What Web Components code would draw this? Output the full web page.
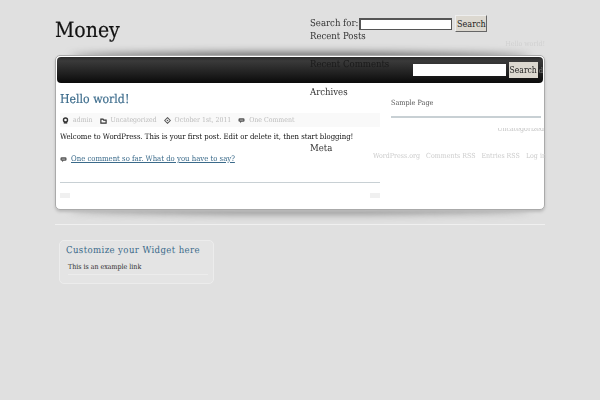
<!DOCTYPE html>
<html>
<head>
<meta charset="utf-8">
<title>Money</title>
<style>
  html, body { margin: 0; padding: 0; background: #e0e0e0; }
  body { font-family: "DejaVu Serif", serif; font-stretch: condensed; height: 400px; overflow: hidden; }
</style>
</head>
<body>
<money-page>
  <money-header slot="header" title-text="Money"></money-header>
  <money-panel slot="panel">
    <money-post></money-post>
    <money-sidebar slot="side"></money-sidebar>
  </money-panel>
  <money-widget slot="footer" heading="Customize your Widget here">This is an example link</money-widget>
</money-page>

<script>
const iconPaths = {
  user: '<circle cx="4" cy="3.4" r="2.3" fill="none" stroke="#333" stroke-width="1.6"/><rect x="2" y="5.800" width="4" height="1.700" fill="#333"/>',
  folder: '<path d="M1 3.500V2.500h2.500l.7 1H7v3.500H1z" fill="none" stroke="#333" stroke-width="1.300"/>',
  clock: '<path d="M4 .8L7.200 4 4 7.200.8 4z" fill="none" stroke="#555" stroke-width="1.200"/><circle cx="4" cy="4" r=".9" fill="#555"/>',
  bubble: '<path d="M2 1.500h4q1.500 0 1.500 1.500v1q0 1.500-1.500 1.500H4L2.500 7V5.500H2Q.5 5.500.5 4V3q0-1.500 1.500-1.500z" fill="#555"/><rect x="2" y="3.100" width="4" height=".8" fill="#ddd"/>'
};
const icon = name => `<svg width="7" height="7" viewBox="0 0 8 8">${iconPaths[name]}</svg>`;

class MoneyPage extends HTMLElement {
  connectedCallback() {
    this.attachShadow({ mode: 'open' }).innerHTML = `
      <style>
        :host { display: block; width: 490px; margin-left: 55px; position: relative; filter: blur(.3px); text-rendering: geometricPrecision; }
        .rule { height: 1px; background: #f0f0f0; margin-top: 14px; }
        .foot { padding: 15px 0 0 4px; }
      </style>
      <slot name="header"></slot>
      <slot name="panel"></slot>
      <div class="rule"></div>
      <div class="foot"><slot name="footer"></slot></div>`;
  }
}

class MoneyHeader extends HTMLElement {
  connectedCallback() {
    this.attachShadow({ mode: 'open' }).innerHTML = `
      <style>
        :host { display: flex; height: 55px; position: relative; }
        h1 { margin: 17px 0 0; font: 400 condensed 21px/26px "DejaVu Serif", serif; -webkit-text-stroke: .2px #111; color: #111; width: 255px; }
        form { display: flex; align-items: center; height: 17px; margin-top: 15px; font-size: 9.5px; color: #333; }
        input { box-sizing: border-box; width: 93px; height: 12px; border: 1px solid #555; border-width: 2px 1px 1px 2px; background: #fff; margin: 0 3px 0 1px; padding: 0; }
        button { height: 17px; width: 32px; padding: 0; font: 400 condensed 9px "DejaVu Serif", serif; color: #222; background: #dcd8d0; border: 1px solid #eee; border-right-color: #666; border-bottom-color: #666; }
        .hello { position: absolute; right: 0; top: 40px; font-size: 7px; color: #d0d0d0; }
      </style>
      <h1>${this.getAttribute('title-text')}</h1>
      <form><label>Search for:</label><input><button type="button">Search</button></form>
      <span class="hello">Hello world!</span>`;
  }
}

class MoneyPanel extends HTMLElement {
  connectedCallback() {
    this.attachShadow({ mode: 'open' }).innerHTML = `
      <style>
        :host { display: block; position: relative; }
        .box { position: relative; background: #fff; border: 1px solid #aaa; border-radius: 5px; padding: 1px; height: 151px; box-shadow: 0 2px 3px #bbb; }
        .glow { position: absolute; left: 15px; right: 15px; height: 8px; border-radius: 50%; background: #555; filter: blur(4px); }
        .glow.t { top: -2px; }
        .glow.b { bottom: -3px; background: #777; }
        nav { display: flex; justify-content: flex-end; align-items: center; height: 26px; border-radius: 4px; font-size: 7.5px; color: #777;
          background: linear-gradient(#2a2a2a, #3a3a3a 15%, #1c1c1c 70%, #0a0a0a); }
        nav input { box-sizing: border-box; width: 93px; height: 12px; padding: 0; border: 0; background: #fff; margin-right: 3px; }
        nav button { width: 29px; height: 16px; padding: 0; margin-right: 1px; font: 400 condensed 8.500px "DejaVu Serif", serif; color: #222; background: #dcd8d0; border: 0; }
        .body { display: flex; padding-left: 3px; }
        .main { width: 320px; }
        .lists { position: absolute; left: 255px; top: -25px; font-size: 9.5px; color: #333; line-height: 14px; }
        .lists div { height: 28px; }
        .lists .dark { color: #1a1a1a; }
        .lists .gap { height: 56px; }
      </style>
      <div class="glow t"></div>
      <div class="glow b"></div>
      <div class="box">
        <nav><input><button type="button">Search</button><span>d</span></nav>
        <div class="body">
          <div class="main"><slot></slot></div>
          <slot name="side"></slot>
        </div>
      </div>
      <div class="lists"><div>Recent Posts</div><div class="dark">Recent Comments</div><div class="gap">Archives</div><div>Meta</div></div>`;
  }
}

class MoneyPost extends HTMLElement {
  connectedCallback() {
    this.attachShadow({ mode: 'open' }).innerHTML = `
      <style>
        :host { display: block; }
        h2 { margin: 0; padding-top: 9px; height: 21px; font: 400 condensed 12.200px/15px "DejaVu Serif", serif; -webkit-text-stroke: .15px #3a6a8a; color: #3a6a8a; }
        .meta { display: flex; align-items: center; height: 14px; padding-left: 2px; background: #f9f9f9; font-size: 6.900px; color: #bbb; }
        .meta span { margin: 0 7px 0 4px; white-space: nowrap; }
        p { margin: 5px 0 0; font-size: 7.700px; line-height: 10px; color: #111; white-space: nowrap; }
        .comment { display: flex; align-items: center; gap: 4px; margin-top: 12px; font-size: 7.700px; line-height: 10px; }
        .comment a { color: #3a6a8a; text-decoration: underline; }
        .foot { margin-top: 18px; border-top: 1px solid #c8d0d4; height: 15px; display: flex; justify-content: space-between; align-items: flex-end; }
        .foot i { width: 10px; height: 5px; background: #f0f0f0; }
      </style>
      <h2>Hello world!</h2>
      <div class="meta">${icon('user')}<span>admin</span>${icon('folder')}<span>Uncategorized</span>${icon('clock')}<span>October 1st, 2011</span>${icon('bubble')}<span>One Comment</span></div>
      <p>Welcome to WordPress. This is your first post. Edit or delete it, then start blogging!</p>
      <div class="comment">${icon('bubble')}<a>One comment so far. What do you have to say?</a></div>
      <div class="foot"><i></i><i></i></div>`;
  }
}

class MoneySidebar extends HTMLElement {
  connectedCallback() {
    this.attachShadow({ mode: 'open' }).innerHTML = `
      <style>
        :host { display: block; position: relative; flex: 1; padding: 0 2px 0 11px; }
        .page { font-size: 7.200px; color: #555; padding-top: 15px; height: 18px; }
        .bar { height: 2px; background: #c8d0d4; }
        .cat { position: absolute; right: -1px; top: 42px; font-size: 7px; color: #c0c0c0; clip-path: inset(3px 0 0 0); }
        .links { position: absolute; left: -7px; top: 69px; display: flex; gap: 6px; font-size: 7px; color: #ccc; white-space: nowrap; }
      </style>
      <div class="page">Sample Page</div>
      <div class="bar"></div>
      <span class="cat">Uncategorized</span>
      <div class="links"><span>WordPress.org</span><span>Comments RSS</span><span>Entries RSS</span><span>Log in</span></div>`;
  }
}

class MoneyWidget extends HTMLElement {
  connectedCallback() {
    this.attachShadow({ mode: 'open' }).innerHTML = `
      <style>
        :host { display: block; width: 153px; height: 42px; background: #e4e4e4; border: 1px solid #ececec; border-radius: 5px; padding: 0; }
        h3 { margin: 0; padding: 4px 0 0 6px; font: 400 condensed 9.500px/12px "DejaVu Serif", serif; color: #3a6a8a; letter-spacing: .4px; }
        .row { margin: 5px 5px 0 8px; padding-bottom: 2px; border-bottom: 1px solid #ececec; font-size: 7px; line-height: 10px; color: #2a2a2a; }
      </style>
      <h3>${this.getAttribute('heading')}</h3>
      <div class="row"><slot></slot></div>`;
  }
}

customElements.define('money-page', MoneyPage);
customElements.define('money-header', MoneyHeader);
customElements.define('money-panel', MoneyPanel);
customElements.define('money-post', MoneyPost);
customElements.define('money-sidebar', MoneySidebar);
customElements.define('money-widget', MoneyWidget);
</script>
</body>
</html>
